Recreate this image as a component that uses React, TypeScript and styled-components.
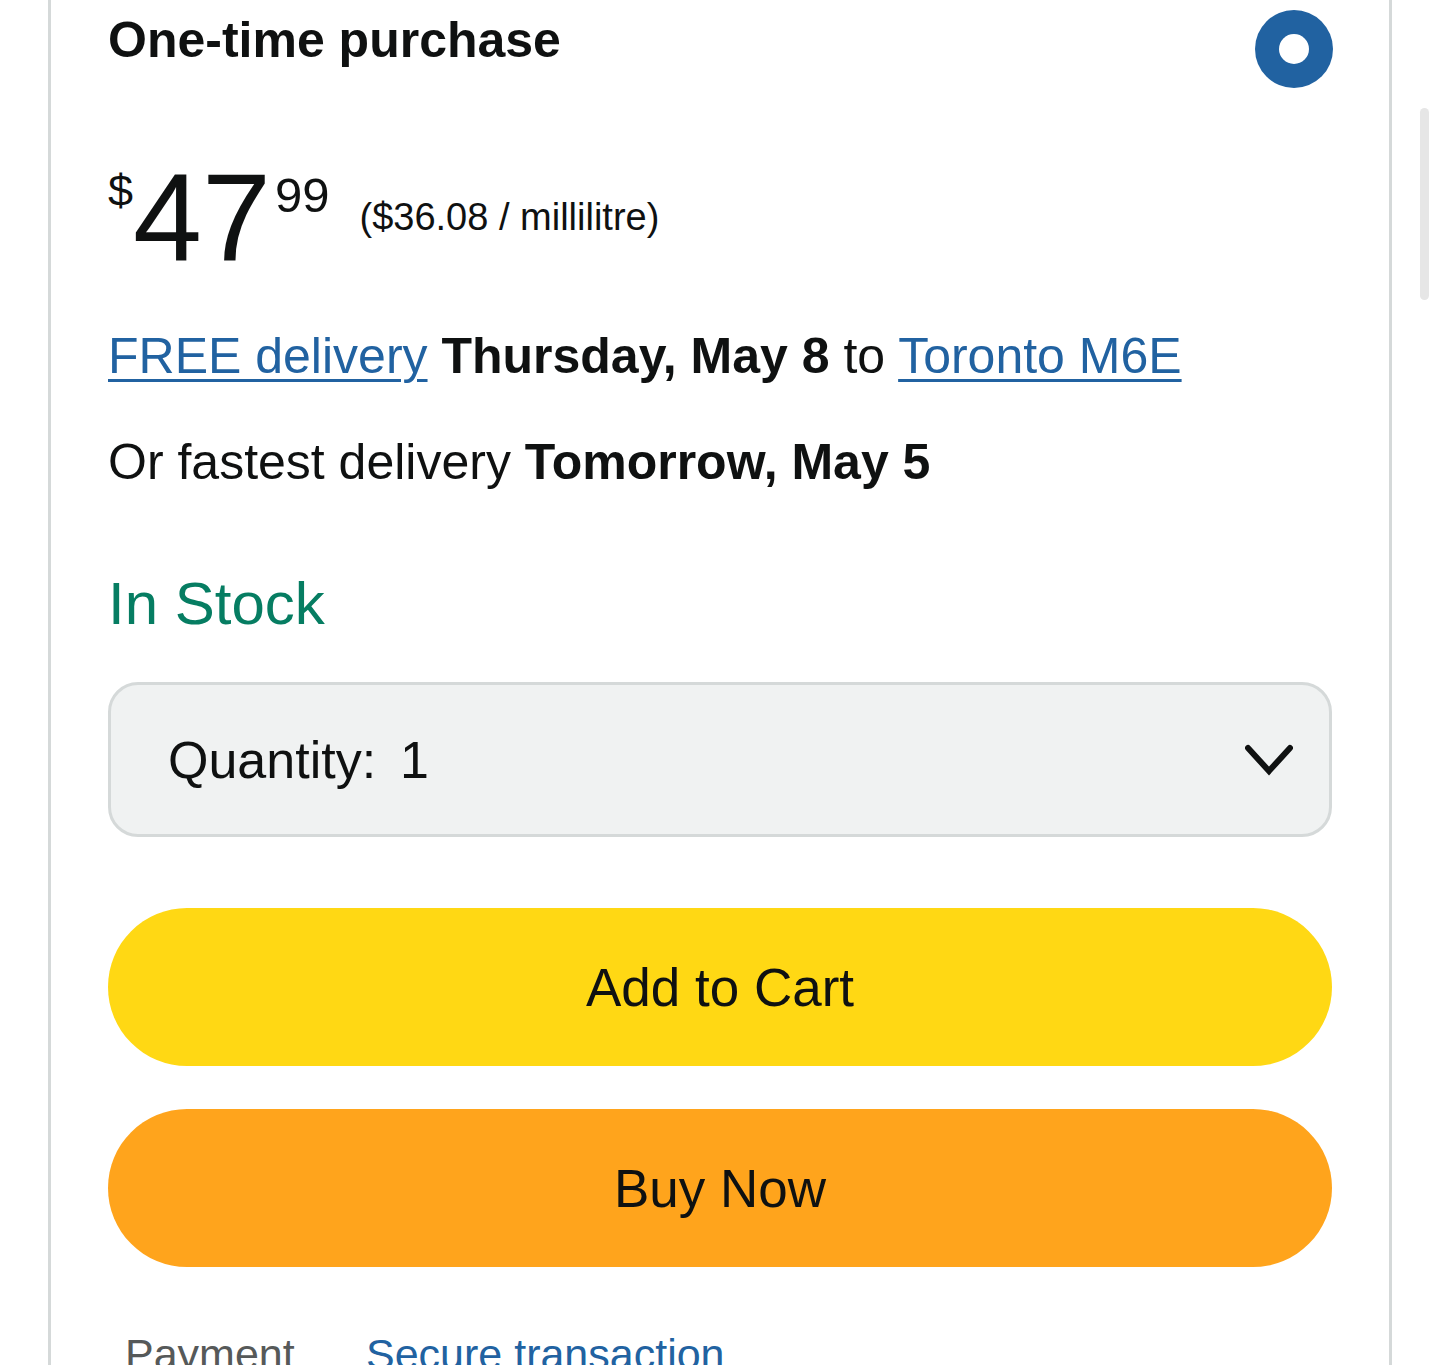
import React from 'react';
import styled, { createGlobalStyle } from 'styled-components';

const GlobalStyle = createGlobalStyle`
  html, body {
    margin: 0;
    padding: 0;
    background: #ffffff;
    overflow: hidden;
  }
  body {
    font-family: "Liberation Sans", Arial, sans-serif;
    color: #0f1111;
  }
`;

const Page = styled.div`
  position: relative;
  width: 1440px;
  height: 1365px;
  overflow: hidden;
  background: #ffffff;
`;

const ScrollThumb = styled.div`
  position: absolute;
  left: 1420px;
  top: 108px;
  width: 9px;
  height: 192px;
  border-radius: 5px;
  background: #e6e6e6;
`;

const Card = styled.section`
  margin-left: 48px;
  width: 1344px;
  box-sizing: border-box;
  min-height: 1365px;
  border-left: 3px solid #d5d9d9;
  border-right: 3px solid #d5d9d9;
  padding: 10px 57px 0;
`;

const HeaderRow = styled.div`
  display: flex;
  justify-content: space-between;
  align-items: flex-start;
`;

const Title = styled.h2`
  margin: 0;
  font-size: 50px;
  line-height: 60px;
  font-weight: 700;
  color: #0f1111;
`;

const Radio = styled.span`
  width: 78px;
  height: 78px;
  margin-right: -1px;
  border-radius: 50%;
  background: #2162a1;
  display: flex;
  align-items: center;
  justify-content: center;
  flex-shrink: 0;

  &::after {
    content: '';
    width: 30px;
    height: 30px;
    border-radius: 50%;
    background: #ffffff;
  }
`;

const PriceRow = styled.div`
  display: flex;
  align-items: flex-start;
  margin-top: 67px;
  color: #0f1111;
`;

const PricePart = styled.span<{ $size: number; $offset: number; $gap?: number }>`
  font-size: ${({ $size }) => $size}px;
  line-height: 1;
  margin-top: ${({ $offset }) => $offset}px;
  margin-left: ${({ $gap }) => $gap ?? 0}px;
`;

const Line = styled.p<{ $top: number }>`
  margin: ${({ $top }) => $top}px 0 0;
  font-size: 50px;
  line-height: 60px;
  color: #0f1111;
  white-space: nowrap;
`;

const Link = styled.a`
  color: #2162a1;
  text-decoration: underline;
  text-decoration-thickness: 3px;
  text-underline-offset: 6px;
`;

const Strong = styled.b`
  font-weight: 700;
`;

const Stock = styled.p`
  margin: 77px 0 0;
  font-size: 60px;
  line-height: 70px;
  color: #067d62;
`;

const QuantityBox = styled.div`
  margin-top: 43px;
  height: 155px;
  box-sizing: border-box;
  border: 3px solid #d5d9d9;
  border-radius: 30px;
  background: #f0f2f2;
  display: flex;
  align-items: center;
  justify-content: space-between;
  padding: 0 36px 0 57px;
  font-size: 52px;
  color: #0f1111;
`;

const QuantityLabel = styled.span`
  display: flex;
  gap: 24px;
`;

const ActionButton = styled.button<{ $bg: string; $top: number }>`
  display: block;
  width: 100%;
  height: 158px;
  margin-top: ${({ $top }) => $top}px;
  border: none;
  border-radius: 79px;
  background: ${({ $bg }) => $bg};
  font-family: "Liberation Sans", Arial, sans-serif;
  font-size: 53px;
  color: #0f1111;
  cursor: pointer;
`;

const InfoRow = styled.div`
  display: grid;
  grid-template-columns: 241px 1fr;
  margin-top: 61px;
  padding-left: 17px;
  font-size: 43px;
  line-height: 52px;
`;

const InfoLabel = styled.span`
  color: #565959;
`;

const InfoValue = styled.span`
  color: #2162a1;
`;

const Chevron = () => (
  <svg width="48" height="32" viewBox="0 0 48 32" fill="none">
    <polyline
      points="3,4 24,27 45,4"
      stroke="#0f1111"
      strokeWidth="6"
      strokeLinecap="round"
      strokeLinejoin="miter"
    />
  </svg>
);

export default function App() {
  return (
    <Page>
      <GlobalStyle />
      <Card>
        <HeaderRow>
          <Title>One-time purchase</Title>
          <Radio />
        </HeaderRow>

        <PriceRow>
          <PricePart $size={45} $offset={13}>$</PricePart>
          <PricePart $size={124} $offset={0}>47</PricePart>
          <PricePart $size={49} $offset={16} $gap={4}>99</PricePart>
          <PricePart $size={38} $offset={43} $gap={30}>($36.08 / millilitre)</PricePart>
        </PriceRow>

        <Line $top={47}>
          <Link>FREE delivery</Link> <Strong>Thursday, May 8</Strong> to{' '}
          <Link>Toronto M6E</Link>
        </Line>
        <Line $top={46}>
          Or fastest delivery <Strong>Tomorrow, May 5</Strong>
        </Line>

        <Stock>In Stock</Stock>

        <QuantityBox>
          <QuantityLabel>
            <span>Quantity:</span>
            <span>1</span>
          </QuantityLabel>
          <Chevron />
        </QuantityBox>

        <ActionButton $bg="#ffd814" $top={71}>Add to Cart</ActionButton>
        <ActionButton $bg="#ffa41c" $top={43}>Buy Now</ActionButton>

        <InfoRow>
          <InfoLabel>Payment</InfoLabel>
          <InfoValue>Secure transaction</InfoValue>
        </InfoRow>
      </Card>
      <ScrollThumb />
    </Page>
  );
}
